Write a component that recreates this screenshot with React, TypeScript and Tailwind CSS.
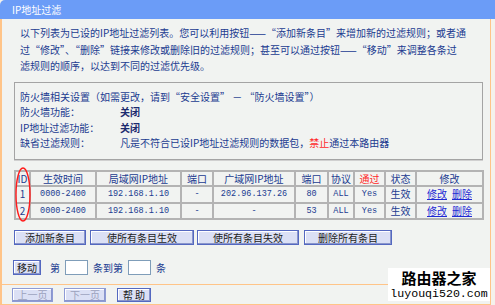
const cjk = "font-['Noto_Sans_CJK_SC','Noto_Sans',sans-serif]";
const mono = "font-['Liberation_Mono','DejaVu_Sans_Mono',monospace]";

function Btn({ children, w, disabled }: { children: React.ReactNode; w: string; disabled?: boolean }) {
    return (
        <div
            className={`${w} h-full flex items-center justify-center border bg-[#dbe0f5] text-[10px] leading-none ${
                disabled ? "border-[#8e9bd6] text-[#9ba2bd]" : "border-[#5468c0] text-[#1c1c1c]"
            } shadow-[inset_-1px_-1px_0_#8a96cc,inset_1px_1px_0_#ffffff]`}
        >
            {children}
        </div>
    );
}

const rows = [
    { id: "1", time: "0000-2400", lan: "192.168.1.10", lport: "-", wan: "202.96.137.26", wport: "80" },
    { id: "2", time: "0000-2400", lan: "192.168.1.10", lport: "-", wan: "-", wport: "53" },
];

export default function App() {
    const td = "border-2 border-[#b3b3b3] text-center p-0 leading-none";
    return (
        <div className={`relative w-[495px] h-[305px] overflow-hidden bg-[#f4f2ec] text-[#213b90] text-[10px] ${cjk}`}>
            <div className="h-[19px] bg-[#6b9cf7] rounded-tl-[5px] pl-[12px] flex items-center text-white text-[10px]">
                IP地址过滤
            </div>

            <div className="w-[491px] border-l-2 border-r border-b-2 border-[#ffc488] bg-[#f1f3f1] flex flex-col">
                <div className="pl-[18px] pt-[6px] leading-[16.5px] whitespace-nowrap">
                    <div>以下列表为已设的IP地址过滤列表。您可以利用按钮——“添加新条目”来增加新的过滤规则；或者通</div>
                    <div>过“修改”、“删除”链接来修改或删除旧的过滤规则；甚至可以通过按钮——“移动”来调整各条过</div>
                    <div>滤规则的顺序，以达到不同的过滤优先级。</div>
                </div>

                <div className="ml-[12px] mt-[7.5px] w-[469px] border border-[#a4a4a4] shadow-[0_1px_0_#d0d0d0] pl-[5px] pt-[5.5px] pb-[8.5px] leading-[15.5px] whitespace-nowrap">
                    <div>防火墙相关设置（如需更改，请到“安全设置” － “防火墙设置”）</div>
                    <div className="flex">
                        <span className="w-[100px]">防火墙功能：</span>
                        <span className="font-bold text-[#1b2a6e]">关闭</span>
                    </div>
                    <div className="flex">
                        <span className="w-[100px]">IP地址过滤功能：</span>
                        <span className="font-bold text-[#1b2a6e]">关闭</span>
                    </div>
                    <div className="flex">
                        <span className="w-[100px]">缺省过滤规则：</span>
                        <span>
                            凡是不符合已设IP地址过滤规则的数据包，<span className="text-[#ff2a2a]">禁止</span>通过本路由器
                        </span>
                    </div>
                </div>

                <div className="relative ml-[12px] mt-[10px]">
                    <table className="table-fixed border-collapse w-[468px]">
                        <colgroup>
                            <col className="w-[15px]" />
                            <col className="w-[66px]" />
                            <col className="w-[85px]" />
                            <col className="w-[32px]" />
                            <col className="w-[82px]" />
                            <col className="w-[33px]" />
                            <col className="w-[26px]" />
                            <col className="w-[31px]" />
                            <col className="w-[31px]" />
                            <col className="w-[67px]" />
                        </colgroup>
                        <tbody>
                            <tr className="h-[15px]">
                                <td className={td}>ID</td>
                                <td className={td}>生效时间</td>
                                <td className={td}>局域网IP地址</td>
                                <td className={td}>端口</td>
                                <td className={td}>广域网IP地址</td>
                                <td className={td}>端口</td>
                                <td className={td}>协议</td>
                                <td className={`${td} text-[#ff2a2a]`}>通过</td>
                                <td className={td}>状态</td>
                                <td className={td}>修改</td>
                            </tr>
                            {rows.map((r) => (
                                <tr key={r.id} className="h-[16.5px]">
                                    <td className={td}>{r.id}</td>
                                    <td className={`${td} ${mono} text-[8.5px]`}>{r.time}</td>
                                    <td className={`${td} ${mono} text-[8.5px]`}>{r.lan}</td>
                                    <td className={`${td} ${mono} text-[8.5px]`}>{r.lport}</td>
                                    <td className={`${td} ${mono} text-[8.5px]`}>{r.wan}</td>
                                    <td className={`${td} ${mono} text-[8.5px]`}>{r.wport}</td>
                                    <td className={`${td} ${mono} text-[8.5px]`}>ALL</td>
                                    <td className={`${td} ${mono} text-[8.5px]`}>Yes</td>
                                    <td className={td}>生效</td>
                                    <td className={td}>
                                        <span className="underline text-[#1f2ad4] mr-[5px]">修改</span>
                                        <span className="underline text-[#1f2ad4]">删除</span>
                                    </td>
                                </tr>
                            ))}
                        </tbody>
                    </table>
                    {/* red marker round the ID column */}
                    <svg className="absolute left-[1px] top-[-3px]" width="16" height="55" viewBox="0 0 16 55">
                        <ellipse cx="8" cy="27.5" rx="7" ry="26.5" fill="none" stroke="#ff1a1a" strokeWidth="1.4" />
                    </svg>
                </div>

                <div className="ml-[12px] mt-[10px] h-[15px] flex">
                    <Btn w="w-[72px]">添加新条目</Btn>
                    <div className="w-[4px]" />
                    <Btn w="w-[104px]">使所有条目生效</Btn>
                    <div className="w-[3px]" />
                    <Btn w="w-[102px]">使所有条目失效</Btn>
                    <div className="w-[5px]" />
                    <Btn w="w-[88px]">删除所有条目</Btn>
                </div>

                <div className="ml-[11px] mt-[15px] h-[15px] flex items-center">
                    <Btn w="w-[28px]">移动</Btn>
                    <span className="ml-[9px]">第</span>
                    <div className="ml-[5px] w-[23px] h-[15px] bg-white border border-[#7f9db9]" />
                    <span className="ml-[5px]">条到第</span>
                    <div className="ml-[5px] w-[23px] h-[15px] bg-white border border-[#7f9db9]" />
                    <span className="ml-[5px]">条</span>
                </div>

                <div className="mt-[9px] border-t border-[#ffc488] pl-[10px] pt-[3px] pb-[2px] h-[20px] flex">
                    <Btn w="w-[41px]" disabled>
                        上一页
                    </Btn>
                    <div className="w-[11px]" />
                    <Btn w="w-[42px]" disabled>
                        下一页
                    </Btn>
                    <div className="w-[11px]" />
                    <Btn w="w-[34px]">帮 助</Btn>
                </div>
            </div>

            <div className="absolute left-[388px] top-[268px] w-[102px] h-[33px] bg-white flex flex-col items-center justify-center text-black">
                <div className="text-[15px] leading-[18px] font-bold font-['Noto_Sans_CJK_SC',serif]">路由器之家</div>
                <div className={`${mono} text-[11.6px] leading-[13px]`}>luyouqi520.com</div>
            </div>
        </div>
    );
}
